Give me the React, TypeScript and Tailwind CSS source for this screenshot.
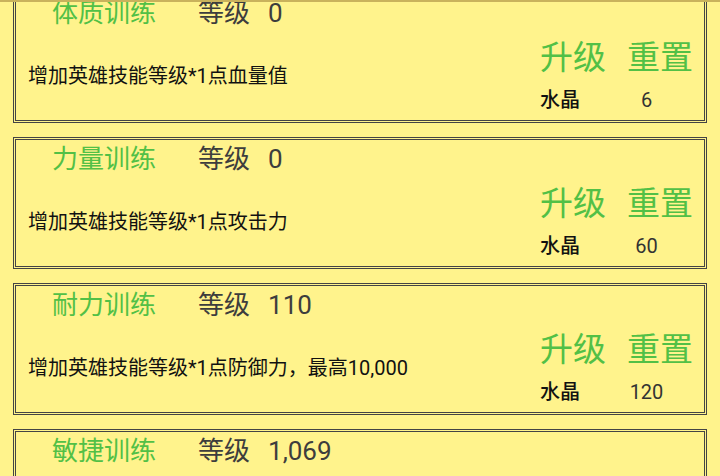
const items = [
  { name: '体质训练', level: '0', desc: '增加英雄技能等级*1点血量值', cost: '6' },
  { name: '力量训练', level: '0', desc: '增加英雄技能等级*1点攻击力', cost: '60' },
  { name: '耐力训练', level: '110', desc: '增加英雄技能等级*1点防御力，最高10,000', cost: '120' },
  { name: '敏捷训练', level: '1,069', desc: '增加英雄技能等级*1点闪避', cost: '200' },
];

function TrainingCard({ name, level, desc, cost }: (typeof items)[number]) {
  return (
    <div className="mx-[13px] mb-[14px] flex h-[132px] flex-col border-[3px] border-double border-[#444] bg-[#fff38c]">
      <div className="flex h-[38px] shrink-0 items-center pl-[36px] text-[26px] leading-[38px]">
        <span className="w-[146px] text-[#52c046]">{name}</span>
        <span className="text-[#3d3d3d]">等级</span>
        <span className="ml-[18px] text-[#3d3d3d]">{level}</span>
      </div>
      <div className="flex flex-1 items-center justify-between pl-[12px] pr-[11px]">
        <p className="text-[20px] leading-[28px] text-[#111]">{desc}</p>
        <div className="flex flex-col self-start pt-[6px]">
          <div className="flex gap-[21px] text-[33px] leading-[40px] text-[#52c046]">
            <button className="leading-[40px]">升级</button>
            <button className="leading-[40px]">重置</button>
          </div>
          <div className="mt-[8px] flex text-[20px] leading-[28px]">
            <span className="w-[60px] font-medium text-[#111]">水晶</span>
            <span className="flex-1 text-center text-[#333]">{cost}</span>
          </div>
        </div>
      </div>
    </div>
  );
}

export default function App() {
  return (
    <div
      className="relative h-[476px] w-[720px] overflow-hidden bg-[#fff38c]"
      style={{ fontFamily: "Roboto, 'Noto Sans CJK SC', sans-serif" }}
    >
      <div className="absolute left-0 right-0 top-0 z-10 h-[2px] bg-[#c9b25c]" />
      <div className="-mt-[9px]">
        {items.map((it) => (
          <TrainingCard key={it.name} {...it} />
        ))}
      </div>
    </div>
  );
}
